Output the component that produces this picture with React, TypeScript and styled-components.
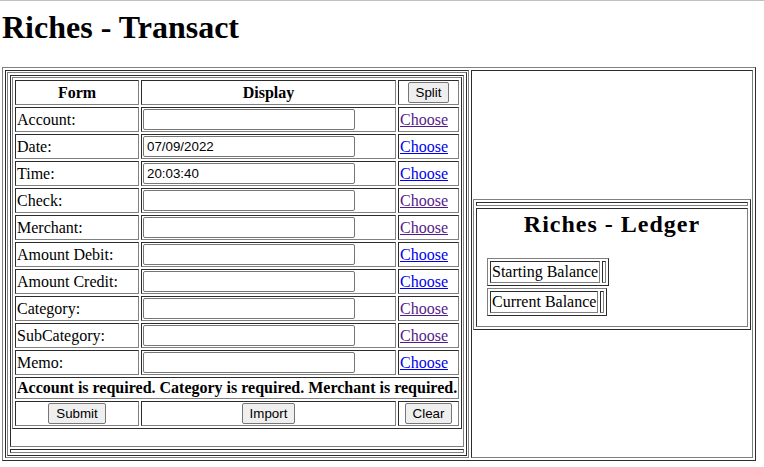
import React from "react";
import styled, { createGlobalStyle } from "styled-components";

const GlobalStyle = createGlobalStyle`
  html, body { margin: 0; padding: 0; background: #ffffff; }
  body {
    font-family: "Liberation Serif", "Times New Roman", serif;
    font-size: 16px;
    color: #000000;
  }
`;

const TopRule = styled.div`
  border-top: 1px solid #c0c0c0;
`;

const Page = styled.div`
  padding: 0 2px;
`;

const Title = styled.h1`
  font-size: 32px;
  font-weight: bold;
  line-height: 37px;
  margin: 8px 0 21px;
`;

const Grid = styled.table<{ $width?: string; $fixed?: boolean }>`
  border: 1px outset gray;
  border-collapse: separate;
  border-spacing: 2px;
  box-sizing: border-box;
  ${(p) => (p.$width ? `width: ${p.$width};` : "")}
  ${(p) => (p.$fixed ? "table-layout: fixed;" : "")}
`;

const Cell = styled.td<{ $width?: string; $center?: boolean }>`
  border: 1px inset gray;
  padding: 1px;
  vertical-align: middle;
  line-height: 18px;
  text-align: ${(p) => (p.$center ? "center" : "left")};
  ${(p) => (p.$width ? `width: ${p.$width};` : "")}
`;

const HeadCell = styled.th<{ $width?: string }>`
  border: 1px inset gray;
  padding: 1px;
  vertical-align: middle;
  line-height: 18px;
  font-weight: bold;
  text-align: center;
  white-space: nowrap;
  ${(p) => (p.$width ? `width: ${p.$width};` : "")}
`;

const FormBox = styled.form`
  margin: 0 0 16px;
`;

const Field = styled.input`
  display: block;
  box-sizing: border-box;
  width: 212px;
  height: 21px;
  margin: 0;
  padding: 1px 3px;
  border: 1px solid #767676;
  border-radius: 2px;
  background: #ffffff;
  color: #000000;
  font-family: "Liberation Sans", Arial, sans-serif;
  font-size: 13.333px;
`;

const Button = styled.button`
  display: block;
  margin: 0 auto;
  box-sizing: border-box;
  height: 21px;
  padding: 0 7px;
  border: 1px solid #767676;
  border-radius: 2px;
  background: #efefef;
  color: #000000;
  font-family: "Liberation Sans", Arial, sans-serif;
  font-size: 13.333px;
  line-height: 17px;
`;

const ChooseLink = styled.a<{ $visited?: boolean }>`
  color: ${(p) => (p.$visited ? "#551a8b" : "#0000ee")};
  text-decoration: underline;
  cursor: pointer;
`;

const LedgerTitle = styled.h2`
  font-size: 24px;
  font-weight: bold;
  letter-spacing: 1px;
  line-height: 28px;
  text-align: center;
  margin: 0 0 20px;
`;

const BalanceList = styled.div`
  display: flex;
  flex-direction: column;
  align-items: flex-start;
  gap: 2px;
  padding: 0 0 9px 9px;
`;

type Row = { label: string; value?: string; visited: boolean };

const rows: Row[] = [
  { label: "Account:", visited: true },
  { label: "Date:", value: "07/09/2022", visited: false },
  { label: "Time:", value: "20:03:40", visited: false },
  { label: "Check:", visited: true },
  { label: "Merchant:", visited: true },
  { label: "Amount Debit:", visited: false },
  { label: "Amount Credit:", visited: false },
  { label: "Category:", visited: true },
  { label: "SubCategory:", visited: true },
  { label: "Memo:", visited: false },
];

const Balance: React.FC<{ label: string }> = ({ label }) => (
  <Grid>
    <tbody>
      <tr>
        <Cell>{label}</Cell>
        <Cell />
      </tr>
    </tbody>
  </Grid>
);

export default function App() {
  return (
    <>
      <GlobalStyle />
      <TopRule />
      <Page>
        <Title>Riches - Transact</Title>
        <Grid $width="754px">
          <tbody>
            <tr>
              <Cell $width="460px">
                <Grid $width="460px">
                  <tbody>
                    <tr>
                      <Cell>
                        <FormBox onSubmit={(e) => e.preventDefault()}>
                          <Grid $width="450px" $fixed>
                            <tbody>
                              <tr>
                                <HeadCell $width="120px">Form</HeadCell>
                                <HeadCell $width="251px">Display</HeadCell>
                                <HeadCell $width="57px">
                                  <Button type="button">Split</Button>
                                </HeadCell>
                              </tr>
                              {rows.map((r) => (
                                <tr key={r.label}>
                                  <Cell>{r.label}</Cell>
                                  <Cell>
                                    <Field type="text" defaultValue={r.value ?? ""} />
                                  </Cell>
                                  <Cell>
                                    <ChooseLink $visited={r.visited} href="#">
                                      Choose
                                    </ChooseLink>
                                  </Cell>
                                </tr>
                              ))}
                              <tr>
                                <HeadCell colSpan={3}>
                                  Account is required. Category is required. Merchant is required.
                                </HeadCell>
                              </tr>
                              <tr>
                                <Cell $center>
                                  <Button type="submit">Submit</Button>
                                </Cell>
                                <Cell $center>
                                  <Button type="button">Import</Button>
                                </Cell>
                                <Cell $center>
                                  <Button type="button">Clear</Button>
                                </Cell>
                              </tr>
                            </tbody>
                          </Grid>
                        </FormBox>
                      </Cell>
                    </tr>
                    <tr>
                      <Cell />
                    </tr>
                  </tbody>
                </Grid>
              </Cell>
              <Cell $width="278px">
                <Grid $width="100%">
                  <tbody>
                    <tr>
                      <Cell />
                    </tr>
                    <tr>
                      <Cell>
                        <LedgerTitle>Riches - Ledger</LedgerTitle>
                        <BalanceList>
                          <Balance label="Starting Balance" />
                          <Balance label="Current Balance" />
                        </BalanceList>
                      </Cell>
                    </tr>
                  </tbody>
                </Grid>
              </Cell>
            </tr>
          </tbody>
        </Grid>
      </Page>
    </>
  );
}
